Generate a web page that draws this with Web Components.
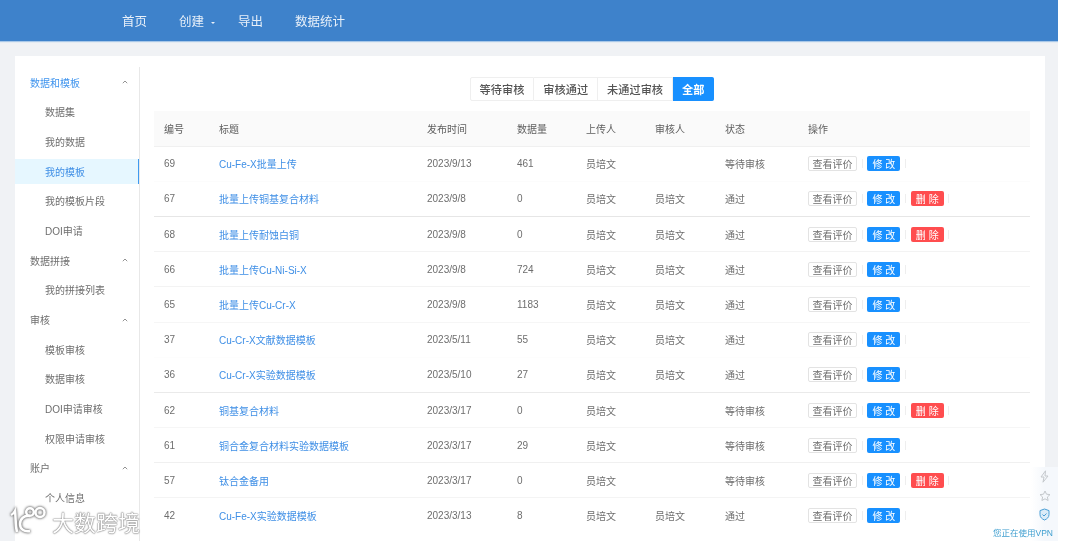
<!DOCTYPE html>
<html lang="zh">
<head>
<meta charset="utf-8">
<title>模板</title>
<style>
  html, body { margin: 0; height: 541px; overflow: hidden; background: #fff; }
  body { font-family: "Liberation Sans", "Noto Sans CJK SC", sans-serif; font-size: 10px; color: #666; }
</style>
</head>
<body>
<app-shell>
  <top-bar slot="top"></top-bar>
  <side-menu slot="side"></side-menu>
  <filter-tabs slot="main"></filter-tabs>
  <data-table slot="main"></data-table>
</app-shell>
<vpn-float></vpn-float>
<brand-mark></brand-mark>

<script>
class AppShell extends HTMLElement {
  constructor() {
    super();
    this.attachShadow({mode: "open"}).innerHTML = `
    <style>
      :host { display: block; width: 1058px; height: 541px; background: #f0f2f5; overflow: hidden; filter: blur(.45px); }
      .body { padding: 15px 13px 0 15px; }
      .card { display: flex; background: #fff; height: 485px; overflow: hidden; }
      .main { flex: 1; padding: 21px 15px 0 14px; min-width: 0; }
    </style>
    <slot name="top"></slot>
    <div class="body">
      <div class="card">
        <slot name="side"></slot>
        <div class="main"><slot name="main"></slot></div>
      </div>
    </div>`;
  }
}

class TopBar extends HTMLElement {
  constructor() {
    super();
    this.attachShadow({mode: "open"}).innerHTML = `
    <style>
      :host { display: flex; height: 41px; background: #3e82cb; box-shadow: 0 1px 1px #a9c8e8; padding-left: 122px; align-items: center; color: #e8f0f9; font-size: 12.5px; box-sizing: border-box; }
      span { display: block; }
      .home { margin-right: 32px; }
      .make { margin-right: 23px; display: flex; align-items: center; }
      .out { margin-right: 32px; }
      i { width: 0; height: 0; margin: 5px 0 0 7px; border: 2px solid transparent; border-top-color: #e8f0f9; border-bottom: 0; }
    </style>
    <span class="home">首页</span>
    <span class="make">创建<i></i></span>
    <span class="out">导出</span>
    <span>数据统计</span>`;
  }
}

class SideMenu extends HTMLElement {
  constructor() {
    super();
    const groups = [
      ["数据和模板", ["数据集", "我的数据", "我的模板", "我的模板片段", "DOI申请"], true],
      ["数据拼接", ["我的拼接列表"]],
      ["审核", ["模板审核", "数据审核", "DOI申请审核", "权限申请审核"]],
      ["账户", ["个人信息"]]
    ];
    let html = "";
    for (const [title, items, open] of groups) {
      html += `<div class="row head ${open ? "open" : ""}">${title}<svg width="6" height="4" viewBox="0 0 6 4"><path d="M.8 3.2 3 1l2.2 2.2" fill="none" stroke="#777" stroke-width=".8"/></svg></div>`;
      for (const it of items) {
        html += `<div class="row sub ${it === "我的模板" ? "on" : ""}">${it}</div>`;
      }
    }
    this.attachShadow({mode: "open"}).innerHTML = `
    <style>
      :host { display: flex; flex-direction: column; gap: 4.7px; width: 125px; flex: none; box-sizing: border-box; margin-top: 11px; padding-top: 2.5px; border-right: 1px solid #e8e8e8; height: 474px; overflow: hidden; font-size: 10px; }
      .row { height: 25px; flex: none; display: flex; align-items: center; justify-content: space-between; box-sizing: border-box; padding: 0 11px 0 15px; color: #6e6e6e; }
      .sub { padding-left: 30px; }
      .open { color: #3f94ee; }
      .on { background: #e6f7ff; color: #3f8fe6; box-shadow: inset -1px 0 0 #3f9af0; }
    </style>${html}`;
  }
}

class FilterTabs extends HTMLElement {
  constructor() {
    super();
    this.attachShadow({mode: "open"}).innerHTML = `
    <style>
      :host { display: flex; justify-content: center; height: 34px; font-size: 11.2px; font-weight: 500; color: #555; }
      div { display: flex; height: 24px; }
      span { display: flex; align-items: center; padding: 0 9px; border: 1px solid #efefef; border-left-width: 0; box-sizing: border-box; background: #fff; }
      span:first-child { border-left-width: 1px; border-radius: 2px 0 0 2px; }
      .on { background: #1890ff; border-color: #1890ff; color: #fff; font-weight: 700; border-radius: 0 2px 2px 0; }
    </style>
    <div><span>等待审核</span><span>审核通过</span><span>未通过审核</span><span class="on">全部</span></div>`;
  }
}

const COLS = "55px 208px 90px 69px 69px 70px 83px 1fr";
// row rules are uneven in the reference, some nearly gone
const RULES = ["#fcfcfc", "#e6e6e6", "#f3f3f3", "#f3f3f3", "#f6f6f6", "#fdfdfd", "#eaeaea", "#f6f6f6", "#f0f0f0", "#f4f4f4", "#fff"];

class DataTable extends HTMLElement {
  constructor() {
    super();
    const rows = [
      [69, "Cu-Fe-X批量上传", "2023/9/13", 461, "", "等待审核", 0],
      [67, "批量上传铜基复合材料", "2023/9/8", 0, "员培文", "通过", 1],
      [68, "批量上传耐蚀白铜", "2023/9/8", 0, "员培文", "通过", 1],
      [66, "批量上传Cu-Ni-Si-X", "2023/9/8", 724, "员培文", "通过", 0],
      [65, "批量上传Cu-Cr-X", "2023/9/8", 1183, "员培文", "通过", 0],
      [37, "Cu-Cr-X文献数据模板", "2023/5/11", 55, "员培文", "通过", 0],
      [36, "Cu-Cr-X实验数据模板", "2023/5/10", 27, "员培文", "通过", 0],
      [62, "铜基复合材料", "2023/3/17", 0, "", "等待审核", 1],
      [61, "铜合金复合材料实验数据模板", "2023/3/17", 29, "", "等待审核", 0],
      [57, "钛合金备用", "2023/3/17", 0, "", "等待审核", 1],
      [42, "Cu-Fe-X实验数据模板", "2023/3/13", 8, "员培文", "通过", 0]
    ];
    const heads = ["编号", "标题", "发布时间", "数据量", "上传人", "审核人", "状态", "操作"];
    const body = rows.map((r, i) => `
      <div class="tr" style="border-color:${RULES[i]}">
        <span>${r[0]}</span><a>${r[1]}</a><span>${r[2]}</span><span>${r[3]}</span>
        <span>员培文</span><span>${r[4]}</span><span>${r[5]}</span>
        <row-actions ${r[6] ? "deletable" : ""}></row-actions>
      </div>`).join("");
    this.attachShadow({mode: "open"}).innerHTML = `
    <style>
      :host { display: block; font-size: 10px; color: #6e6e6e; }
      .tr { display: grid; grid-template-columns: ${COLS}; align-items: center; height: 35.2px; padding-left: 10px; border-bottom: 1px solid #efefef; box-sizing: border-box; }
      .th { background: #fafafa; height: 35.6px; color: #5e5e5e; border-bottom-color: #f0f0f0; }
      a { color: #3f8fe6; }
    </style>
    <div class="tr th">${heads.map(h => `<span>${h}</span>`).join("")}</div>
    ${body}`;
  }
}

class RowActions extends HTMLElement {
  constructor() {
    super();
    this.attachShadow({mode: "open"});
  }
  connectedCallback() {
    const del = this.hasAttribute("deletable") ? `<b class="red">删 除</b><u></u>` : "";
    this.shadowRoot.innerHTML = `
    <style>
      :host { display: flex; align-items: center; font-size: 10px; }
      b { display: flex; align-items: center; justify-content: center; height: 15px; box-sizing: border-box; border-radius: 2px; font-weight: 400; }
      .plain { width: 49px; border: 1px solid #e3e3e3; color: #6e6e6e; background: #fff; }
      .blue { width: 33px; background: #1890ff; color: #fff; }
      .red { width: 33px; background: #ff4d4f; color: #fff; }
      u { width: 1px; height: 9px; background: #eee; margin: 0 4.7px; }
    </style>
    <b class="plain">查看评价</b><u></u><b class="blue">修 改</b><u></u>${del}`;
  }
}

class VpnFloat extends HTMLElement {
  constructor() {
    super();
    this.attachShadow({mode: "open"}).innerHTML = `
    <style>
      :host { position: absolute; left: 1031px; top: 467px; width: 27px; height: 74px; display: flex; flex-direction: column; align-items: center; gap: 6.500px; padding-top: 3px; box-sizing: border-box; background: linear-gradient(90deg, #fff 0, #f5f8fc 50%); filter: blur(.4px); }
      span { position: absolute; right: 5px; top: 59px; white-space: nowrap; font-size: 8.5px; color: #3f9fd0; }
    </style>
    <svg width="11" height="13" viewBox="0 0 11 13"><path d="M6.500.8 2 7h3l-1 5.200L9 6H6z" fill="none" stroke="#c4c8cc" stroke-width="1"/></svg>
    <svg width="12" height="12" viewBox="0 0 12 12"><path d="m6 1 1.500 3.200 3.500.4-2.600 2.400.7 3.500L6 8.800 2.900 10.500l.7-3.500L1 4.600l3.500-.4z" fill="none" stroke="#c4c8cc" stroke-width="1"/></svg>
    <svg width="11" height="13" viewBox="0 0 11 13"><path d="M5.500 1 10 2.600v4c0 2.700-2 4.400-4.500 5.400C3 11 1 9.300 1 6.600v-4z" fill="#dcecf8" stroke="#4a9fd6" stroke-width="1"/><path d="m3.500 6.500 1.500 1.500 2.500-2.500" fill="none" stroke="#4a9fd6" stroke-width="1"/></svg>
    <span>您正在使用VPN</span>`;
  }
}

class BrandMark extends HTMLElement {
  constructor() {
    super();
    this.attachShadow({mode: "open"}).innerHTML = `
    <style>
      :host { position: absolute; left: 9px; top: 505px; display: flex; align-items: center; gap: 4px; color: #fff; font-size: 22px; text-shadow: 0 0 1px #777, 0 0 1px #777, 0 0 2px #999; filter: blur(.3px); }
      svg { filter: drop-shadow(0 0 1px #777) drop-shadow(0 0 1px #999); }
    </style>
    <svg width="39" height="30" viewBox="0 0 39 30" fill="none" stroke="#fff" stroke-width="2.500"><path d="M2 9c2-1 3-2 4-4 1 7 0 13 2 21"/><path d="M21 10C15 9 11 13 11 18s4 8 10 7"/><circle cx="21" cy="6" r="3.800"/><circle cx="31" cy="6.500" r="4.500"/></svg>
    <span>大数跨境</span>`;
  }
}

customElements.define("app-shell", AppShell);
customElements.define("top-bar", TopBar);
customElements.define("side-menu", SideMenu);
customElements.define("filter-tabs", FilterTabs);
customElements.define("data-table", DataTable);
customElements.define("row-actions", RowActions);
customElements.define("vpn-float", VpnFloat);
customElements.define("brand-mark", BrandMark);
</script>
</body>
</html>
